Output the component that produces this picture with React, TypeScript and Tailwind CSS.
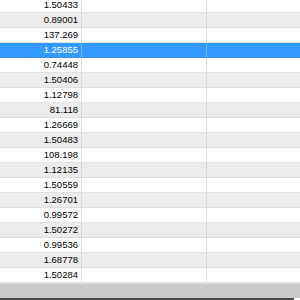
import React from "react";

const values = [
  "1.50433", "0.89001", "137.269", "1.25855", "0.74448", "1.50406", "1.12798",
  "81.118", "1.26669", "1.50483", "108.198", "1.12135", "1.50559", "1.26701",
  "0.99572", "1.50272", "0.99536", "1.68778", "1.50284",
];

const selected = 3;

export default function App() {
  return (
    <div className="w-[300px] h-[300px] overflow-hidden bg-white flex flex-col" style={{ fontFamily: '"Liberation Sans", Arial, sans-serif' }}>
      <div className="flex flex-col mt-[-2px] h-[285px] shrink-0">
        {values.map((v, i) => {
          const sel = i === selected;
          return (
            <div
              key={i}
              className={
                "flex h-[15px] shrink-0 border-b " +
                (sel
                  ? "bg-[#3399ff] border-[#3d8fe0] text-white"
                  : i % 2 === 1
                  ? "bg-[#ececec] border-[#dcdcdc] text-black"
                  : "bg-white border-[#e2e2e2] text-black")
              }
            >
              <div className={"w-[82px] shrink-0 border-r pr-[3px] text-right text-[9.5px] leading-[14px] " + (sel ? "border-[#6fb5f5]" : "border-[#d8d8d8]")}>
                {v}
              </div>
              <div className={"w-[125px] shrink-0 border-r " + (sel ? "border-[#6fb5f5]" : "border-[#d8d8d8]")} />
              <div className="flex-1" />
            </div>
          );
        })}
      </div>
      <div className="h-[15px] shrink-0 bg-[#c9c9c9] border-t border-[#dedede]" />
      <div className="h-[2px] shrink-0 bg-[#4a4a4a] mr-[6px]" />
    </div>
  );
}
